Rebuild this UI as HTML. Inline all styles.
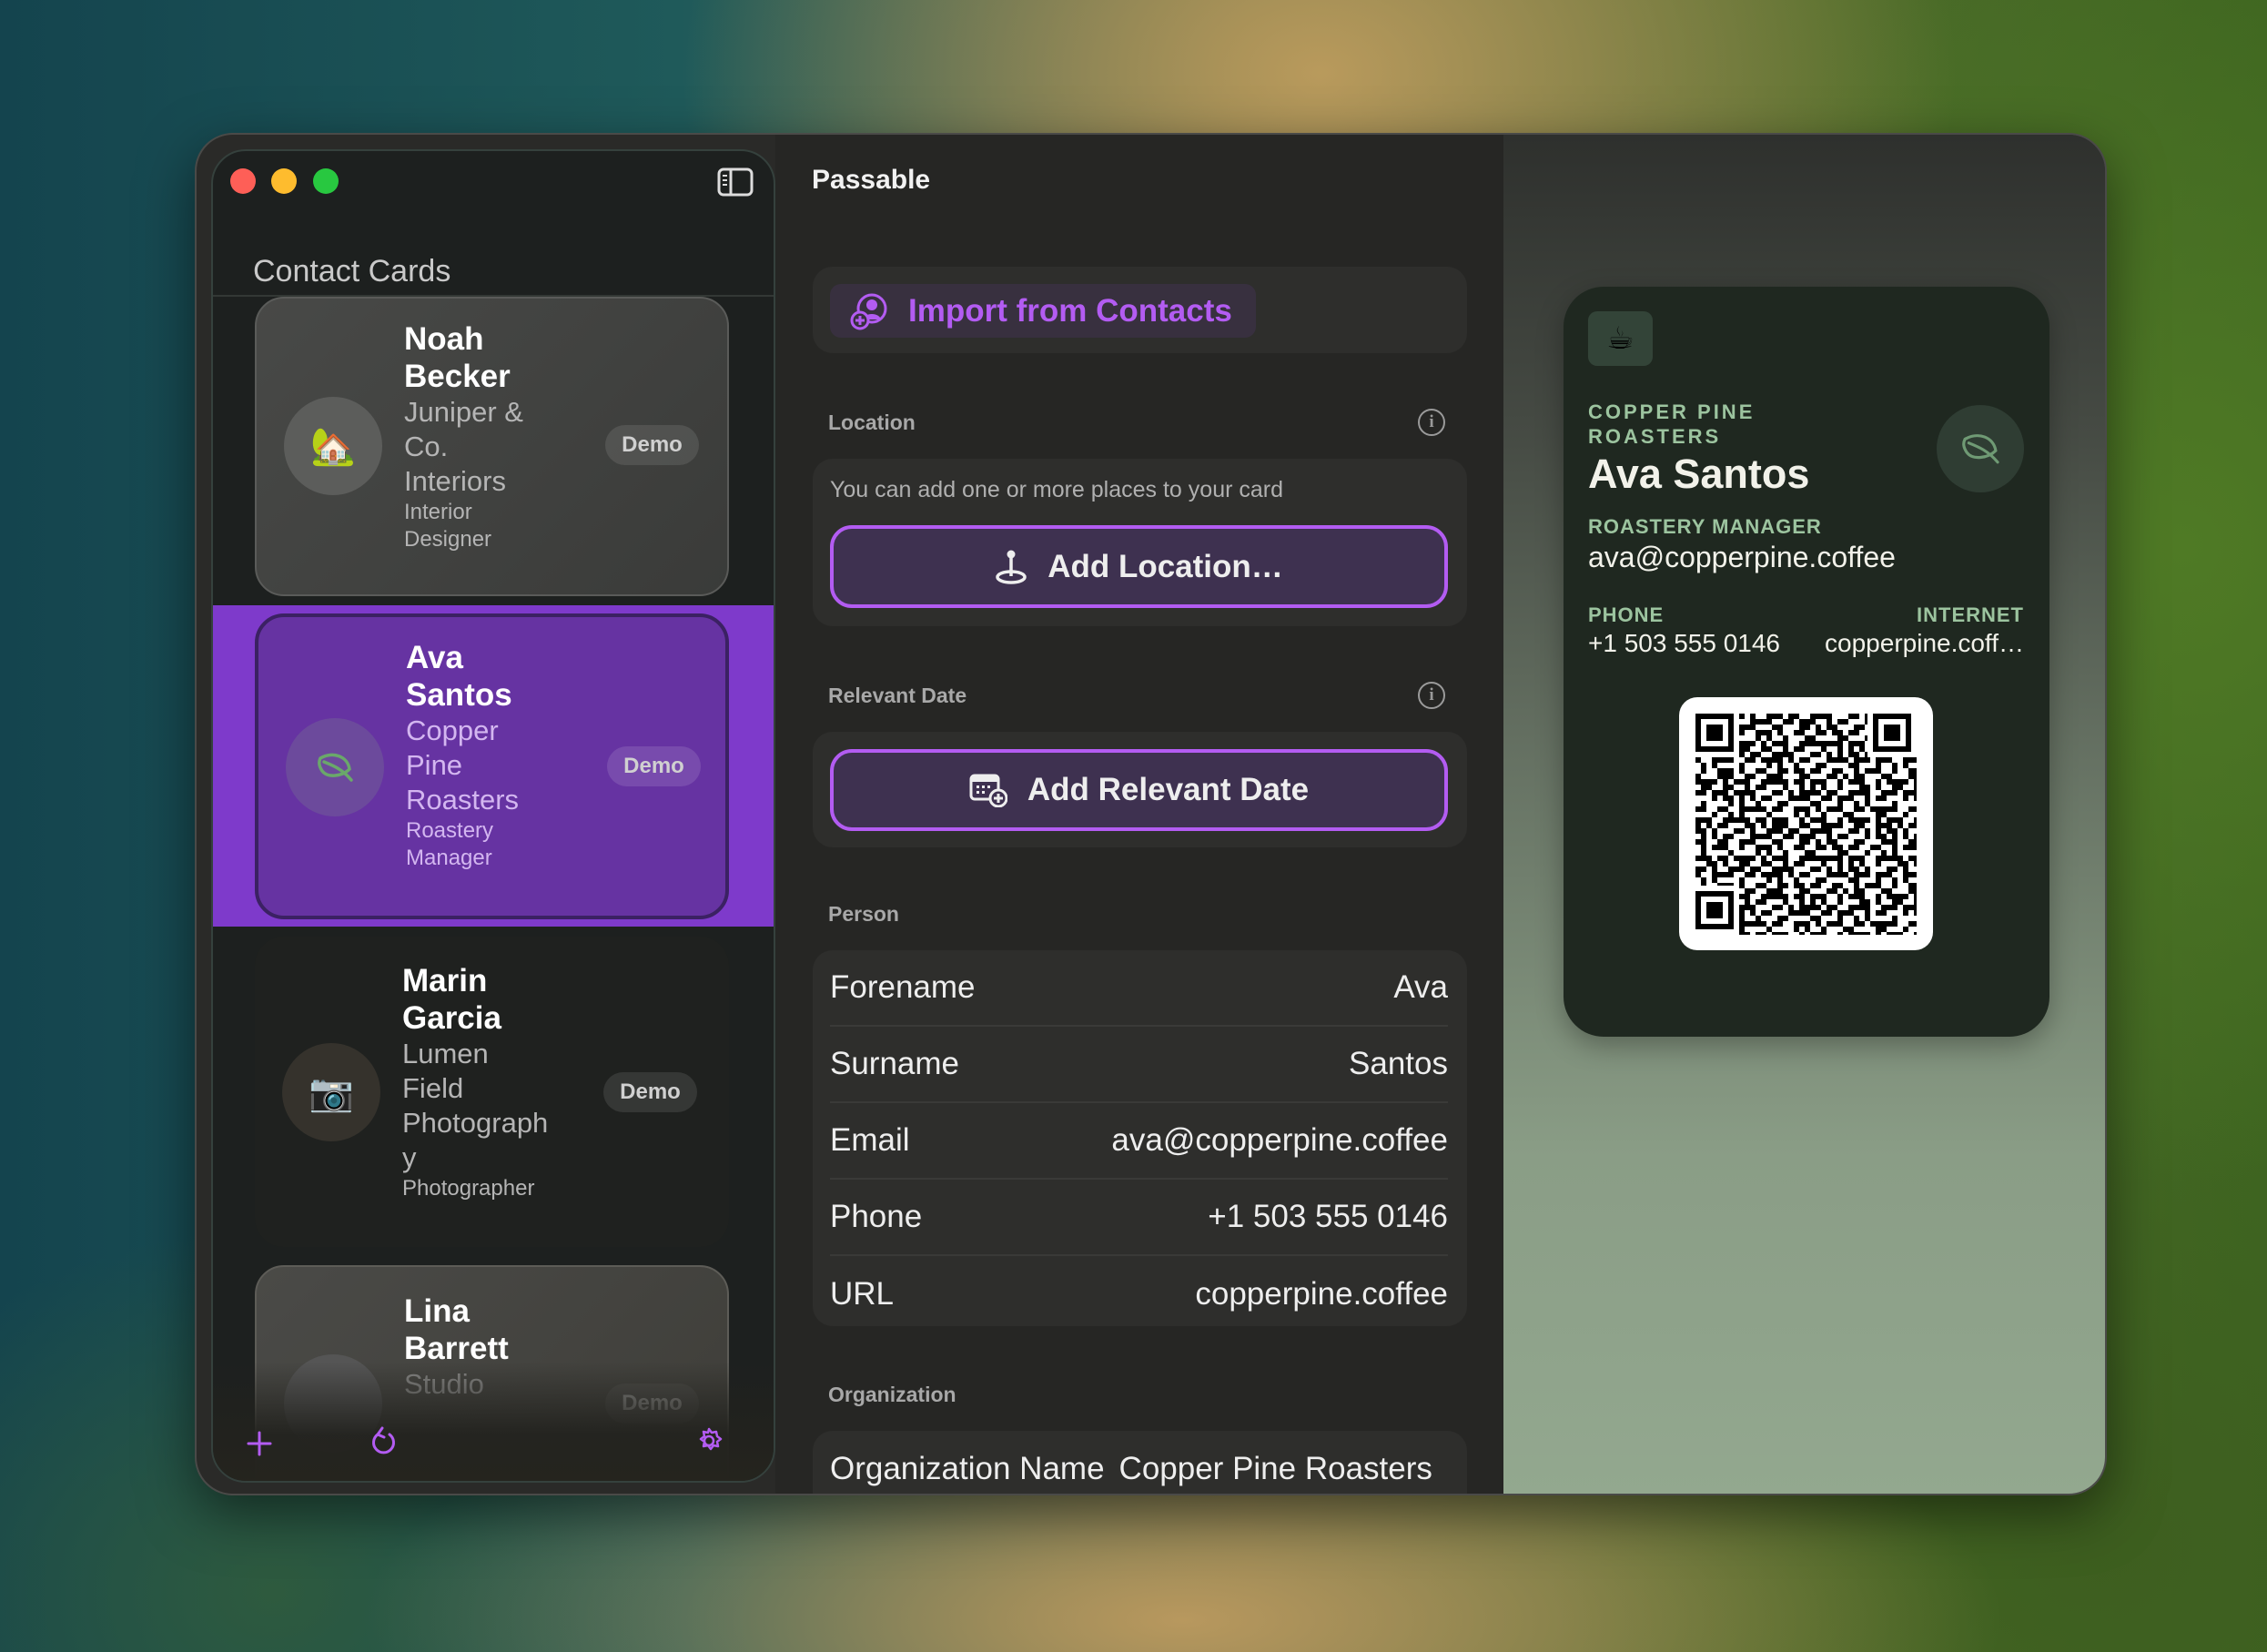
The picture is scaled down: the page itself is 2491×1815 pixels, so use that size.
<!DOCTYPE html>
<html><head><meta charset="utf-8">
<style>
*{margin:0;padding:0;box-sizing:border-box}
html,body{width:2491px;height:1815px;overflow:hidden}
body{position:relative;font-family:"Liberation Sans","DejaVu Sans",sans-serif;
background:
radial-gradient(ellipse 700px 500px at 1450px 80px,#b99a5c 0%,rgba(185,154,92,0) 100%),
radial-gradient(ellipse 600px 700px at 2400px 600px,#4f7a25 0%,rgba(79,122,37,0) 100%),
radial-gradient(ellipse 900px 300px at 1300px 1780px,#b8985e 0%,rgba(184,152,94,0) 100%),
radial-gradient(ellipse 600px 500px at 2300px 1700px,#3d5e1f 0%,rgba(61,94,31,0) 100%),
radial-gradient(ellipse 500px 400px at 300px 1750px,#2e5a3e 0%,rgba(46,90,62,0) 100%),
linear-gradient(90deg,#14444e 0%,#1f5a5a 30%,#5b6a45 55%,#4d6c2a 80%,#3e6520 100%);}
.abs{position:absolute}
.win{left:214px;top:146px;width:2101px;height:1497px;border-radius:42px;background:#2a2a28;overflow:hidden;box-shadow:0 20px 60px rgba(0,0,0,.5);border:2px solid #4a4a48}
.side{left:16px;top:16px;width:620px;height:1465px;border-radius:38px;background:#1d201f;border:2px solid #35413d;overflow:hidden;z-index:2}
.mid{left:636px;top:0;width:802px;height:1497px;background:#262624}
.right{left:1436px;top:0;width:665px;height:1497px;background:linear-gradient(180deg,#2e302d 0%,#464b44 22%,#6b7868 50%,#8a9d86 75%,#93a88f 100%)}
.tl{width:28px;height:28px;border-radius:50%;top:19px}
.card{position:absolute;left:46px;width:521px;border-radius:32px}
.av{position:absolute;left:30px;width:108px;height:108px;border-radius:50%;display:flex;align-items:center;justify-content:center;font-size:40px}
.txt{position:absolute;left:162px;color:#fff}
.nm{font-size:35px;line-height:41px;font-weight:bold}
.org{font-size:31px;line-height:38px;color:#b5b5b5}
.role{font-size:24px;line-height:30px;color:#b5b5b5}
.demo{position:absolute;left:383px;width:103px;height:44px;border-radius:22px;background:rgba(255,255,255,.1);color:#d0d0d0;font-size:24px;font-weight:bold;text-align:center;line-height:44px}
.box{position:absolute;left:41px;width:719px;background:#2e2e2c;border-radius:22px}
.info{position:absolute;width:30px;height:30px;border-radius:50%;border:2.5px solid #9a9a9a;color:#9a9a9a;font-size:19px;font-weight:bold;text-align:center;line-height:25px;font-family:"Liberation Serif",serif}
.btn{position:absolute;left:19px;width:679px;height:91px;border:4px solid #b35cf2;border-radius:24px;background:#3e3150;color:#eee;font-size:35px;font-weight:bold;display:flex;align-items:center;justify-content:center;gap:22px}
.row{position:absolute;left:19px;width:679px;height:84px;display:flex;justify-content:space-between;align-items:center;font-size:35px;color:#eee;border-bottom:2px solid #3a3a38}
.lab{font-size:22px;font-weight:bold;letter-spacing:3px;color:#9cc49f}
.hd{position:absolute;left:910px;font-size:23px;font-weight:bold;color:#a8a8a8}
</style></head><body>
<div class="abs win">
  <div class="abs mid"></div>
  <div class="abs right"></div>
  <div class="abs side">
    <div class="abs tl" style="left:19px;background:#fe5f57"></div>
    <div class="abs tl" style="left:64px;background:#febc2e"></div>
    <div class="abs tl" style="left:110px;background:#28c840"></div>
    <svg class="abs" style="left:554px;top:18px" width="40" height="32" viewBox="0 0 40 32"><rect x="2" y="2" width="36" height="28" rx="5" fill="none" stroke="#ddd" stroke-width="3"/><line x1="15" y1="2" x2="15" y2="30" stroke="#ddd" stroke-width="3"/><line x1="6" y1="9" x2="11" y2="9" stroke="#ddd" stroke-width="2"/><line x1="6" y1="14" x2="11" y2="14" stroke="#ddd" stroke-width="2"/><line x1="6" y1="19" x2="11" y2="19" stroke="#ddd" stroke-width="2"/></svg>
    <div class="abs" style="left:44px;top:113px;font-size:34px;color:#c9c9c9">Contact Cards</div>
    <div class="abs" style="left:0;top:158px;width:620px;height:2px;background:#333835"></div>

    <div class="card" style="top:160px;height:329px;background:linear-gradient(135deg,#484947,#3a3b39);border:2px solid #5a5b59">
      <div class="av" style="top:108px;background:#5c5d5b">🏡</div>
      <div class="txt" style="top:24px"><div class="nm">Noah<br>Becker</div><div class="org">Juniper &amp;<br>Co.<br>Interiors</div><div class="role">Interior<br>Designer</div></div>
      <div class="demo" style="top:139px">Demo</div>
    </div>

    <div class="abs" style="left:0;top:499px;width:620px;height:353px;background:#7e3acb"></div>
    <div class="card" style="top:508px;height:336px;background:#6633a2;border:4px solid #3b2163">
      <div class="av" style="top:111px;background:#6c4a9c"><svg width="44" height="36" viewBox="0 0 44 36"><path d="M6 8 C20 0 36 6 38 20 C30 28 14 30 8 22 C4 16 4 12 6 8 Z M10 12 C20 16 30 20 40 32" fill="none" stroke="#6aa86a" stroke-width="3.5" stroke-linecap="round"/></svg></div>
      <div class="txt" style="top:24px"><div class="nm">Ava<br>Santos</div><div class="org" style="color:#d3b6f0">Copper<br>Pine<br>Roasters</div><div class="role" style="color:#d3b6f0">Roastery<br>Manager</div></div>
      <div class="demo" style="top:142px;background:rgba(255,255,255,.12)">Demo</div>
    </div>

    <div class="card" style="top:863px;height:341px;background:#1f211f">
      <div class="av" style="top:117px;background:#35322c">📷</div>
      <div class="txt" style="top:28px"><div class="nm">Marin<br>Garcia</div><div class="org">Lumen<br>Field<br>Photograph<br>y</div><div class="role">Photographer</div></div>
      <div class="demo" style="top:149px">Demo</div>
    </div>

    <div class="card" style="top:1224px;height:300px;background:linear-gradient(135deg,#4a4a47,#3e3d38);border:2px solid #5d5c57">
      <div class="av" style="top:96px;background:#555"></div>
      <div class="txt" style="top:28px"><div class="nm">Lina<br>Barrett</div><div class="org" style="opacity:.6">Studio</div></div>
      <div class="demo" style="top:128px;opacity:.5">Demo</div>
    </div>
    <div class="abs" style="left:0;top:1330px;width:620px;height:135px;background:linear-gradient(180deg,rgba(29,32,31,0),rgba(34,34,30,.95) 60%,#25241e)"></div>
    <svg class="abs" style="left:36px;top:1405px" width="30" height="30" viewBox="0 0 30 30"><path d="M15 3V27M3 15H27" stroke="#b35cf2" stroke-width="3" stroke-linecap="round"/></svg>
    <svg class="abs" style="left:172px;top:1400px" width="32" height="36" viewBox="0 0 32 36"><path d="M22 10 A11 11 0 1 1 9 10" fill="none" stroke="#b35cf2" stroke-width="3" stroke-linecap="round"/><path d="M14 3 L9 10 L16 13" fill="none" stroke="#b35cf2" stroke-width="3" stroke-linecap="round" stroke-linejoin="round"/></svg>
    <svg class="abs" style="left:529px;top:1401px" width="32" height="32" viewBox="0 0 32 32"><circle cx="16" cy="16" r="5" fill="none" stroke="#b35cf2" stroke-width="2.5"/><path d="M16 3l3 4 5-1 1 5 4 3-4 3 1 5-5-1-3 4-3-4-5 1 1-5-4-3 4-3-1-5 5 1z" fill="none" stroke="#b35cf2" stroke-width="2.5" stroke-linejoin="round"/></svg>
  </div>

  <div class="abs" style="left:676px;top:33px;font-size:30px;font-weight:bold;color:#f2f2f2">Passable</div>

  <div class="abs" style="left:636px;top:0;width:802px;height:1497px">
    <div class="box" style="top:145px;height:95px">
      <div class="abs" style="left:19px;top:19px;width:468px;height:59px;border-radius:12px;background:#38303f;display:flex;align-items:center;padding-left:22px;gap:22px;color:#b35cf2;font-size:35px;font-weight:bold">
        <svg width="42" height="42" viewBox="0 0 42 42"><circle cx="24" cy="18" r="15" fill="none" stroke="#b35cf2" stroke-width="3"/><circle cx="24" cy="14" r="6" fill="#b35cf2"/><path d="M14 30 C16 22 32 22 34 30" fill="#b35cf2"/><circle cx="11" cy="31" r="9" fill="#38303f" stroke="#b35cf2" stroke-width="3"/><path d="M11 26V36M6 31H16" stroke="#b35cf2" stroke-width="3"/></svg>
        Import from Contacts</div>
    </div>
    <div class="box" style="top:356px;height:184px">
      <div class="abs" style="left:19px;top:20px;font-size:25px;color:#b0b0b0">You can add one or more places to your card</div>
      <div class="btn" style="top:73px"><svg width="36" height="40" viewBox="0 0 36 40"><circle cx="18" cy="6" r="4.5" fill="#eee"/><path d="M18 10V30" stroke="#eee" stroke-width="3.5"/><ellipse cx="18" cy="31" rx="15" ry="6" fill="none" stroke="#eee" stroke-width="3.5"/></svg>Add Location…</div>
    </div>
    <div class="box" style="top:656px;height:127px">
      <div class="btn" style="top:19px;height:90px"><svg width="42" height="38" viewBox="0 0 42 38"><rect x="2" y="3" width="30" height="26" rx="4" fill="none" stroke="#eee" stroke-width="3"/><rect x="2" y="3" width="30" height="7" fill="#eee"/><g fill="#eee"><rect x="8" y="14" width="3" height="3"/><rect x="14" y="14" width="3" height="3"/><rect x="20" y="14" width="3" height="3"/><rect x="8" y="20" width="3" height="3"/><rect x="14" y="20" width="3" height="3"/></g><circle cx="32" cy="28" r="9" fill="#3e3150" stroke="#eee" stroke-width="3"/><path d="M32 23V33M27 28H37" stroke="#eee" stroke-width="3"/></svg>Add Relevant Date</div>
    </div>
    <div class="box" style="top:896px;height:413px">
      <div class="row" style="top:0">Forename<span>Ava</span></div>
      <div class="row" style="top:84px">Surname<span>Santos</span></div>
      <div class="row" style="top:168px">Email<span>ava@copperpine.coffee</span></div>
      <div class="row" style="top:252px">Phone<span>+1 503 555 0146</span></div>
      <div class="row" style="top:336px;border:none">URL<span>copperpine.coffee</span></div>
    </div>
    <div class="box" style="top:1424px;height:120px">
      <div class="row" style="top:0;border:none;white-space:nowrap;overflow:hidden;justify-content:flex-start">Organization Name<span style="margin-left:16px">Copper Pine Roasters</span></div>
    </div>
  </div>
</div>
<div class="info" style="left:1558px;top:449px">i</div>
<div class="info" style="left:1558px;top:749px">i</div>
<div class="hd" style="top:451px">Location</div>
<div class="hd" style="top:751px">Relevant Date</div>
<div class="hd" style="top:991px">Person</div>
<div class="hd" style="top:1519px">Organization</div>

<div class="abs" style="left:1718px;top:315px;width:534px;height:824px;border-radius:44px;background:#1f2820;box-shadow:0 10px 30px rgba(0,0,0,.3)">
  <div class="abs" style="left:27px;top:27px;width:71px;height:60px;border-radius:10px;background:#334438;display:flex;align-items:center;justify-content:center;font-size:34px">☕</div>
  <div class="abs lab" style="left:27px;top:124px;line-height:27px">COPPER PINE<br>ROASTERS</div>
  <div class="abs" style="left:27px;top:180px;font-size:45px;font-weight:bold;color:#f2f2ea">Ava Santos</div>
  <div class="abs" style="left:410px;top:130px;width:96px;height:96px;border-radius:50%;background:#2f3d33;display:flex;align-items:center;justify-content:center"><svg width="48" height="38" viewBox="0 0 44 36"><path d="M6 8 C20 0 36 6 38 20 C30 28 14 30 8 22 C4 16 4 12 6 8 Z M10 12 C20 16 30 20 40 32" fill="none" stroke="#6f9a74" stroke-width="3" stroke-linecap="round"/></svg></div>
  <div class="abs lab" style="left:27px;top:251px;letter-spacing:1px">ROASTERY MANAGER</div>
  <div class="abs" style="left:27px;top:279px;font-size:32px;color:#f2f2ea">ava@copperpine.coffee</div>
  <div class="abs lab" style="left:27px;top:348px;letter-spacing:1px">PHONE</div>
  <div class="abs lab" style="right:28px;top:348px;letter-spacing:1px">INTERNET</div>
  <div class="abs" style="left:27px;top:376px;font-size:28px;color:#f2f2ea">+1 503 555 0146</div>
  <div class="abs" style="right:28px;top:376px;font-size:28px;color:#f2f2ea">copperpine.coff…</div>
  <div class="abs" style="left:127px;top:451px;width:279px;height:278px;border-radius:20px;background:#fff">
    <svg class="abs" style="left:18px;top:18px" width="243" height="243" viewBox="0 0 243 243">
      <defs>
        <pattern id="pa" width="42" height="42" patternUnits="userSpaceOnUse"><g fill="#000"><rect x="0" y="0" width="12" height="6"/><rect x="18" y="0" width="6" height="12"/><rect x="30" y="6" width="12" height="6"/><rect x="6" y="12" width="6" height="12"/><rect x="24" y="18" width="12" height="6"/><rect x="0" y="30" width="18" height="6"/><rect x="30" y="30" width="6" height="12"/><rect x="12" y="36" width="6" height="6"/><rect x="36" y="24" width="6" height="6"/></g></pattern>
        <pattern id="pb" width="30" height="18" patternUnits="userSpaceOnUse"><g fill="#000"><rect x="6" y="6" width="6" height="6"/><rect x="18" y="0" width="6" height="6"/><rect x="24" y="12" width="6" height="6"/><rect x="0" y="12" width="6" height="6"/></g></pattern>
      </defs>
      <rect width="243" height="243" fill="url(#pa)"/>
      <rect width="243" height="243" fill="url(#pb)"/>
      <g><rect x="0" y="0" width="48" height="48" fill="#fff"/><rect x="3" y="3" width="36" height="36" fill="none" stroke="#000" stroke-width="6"/><rect x="12" y="12" width="18" height="18" fill="#000"/></g>
      <g transform="translate(195,0)"><rect x="-6" y="0" width="54" height="48" fill="#fff"/><rect x="3" y="3" width="36" height="36" fill="none" stroke="#000" stroke-width="6"/><rect x="12" y="12" width="18" height="18" fill="#000"/></g>
      <g transform="translate(0,195)"><rect x="0" y="-6" width="48" height="54" fill="#fff"/><rect x="3" y="3" width="36" height="36" fill="none" stroke="#000" stroke-width="6"/><rect x="12" y="12" width="18" height="18" fill="#000"/></g>
    </svg>
  </div>
</div>
</body></html>
